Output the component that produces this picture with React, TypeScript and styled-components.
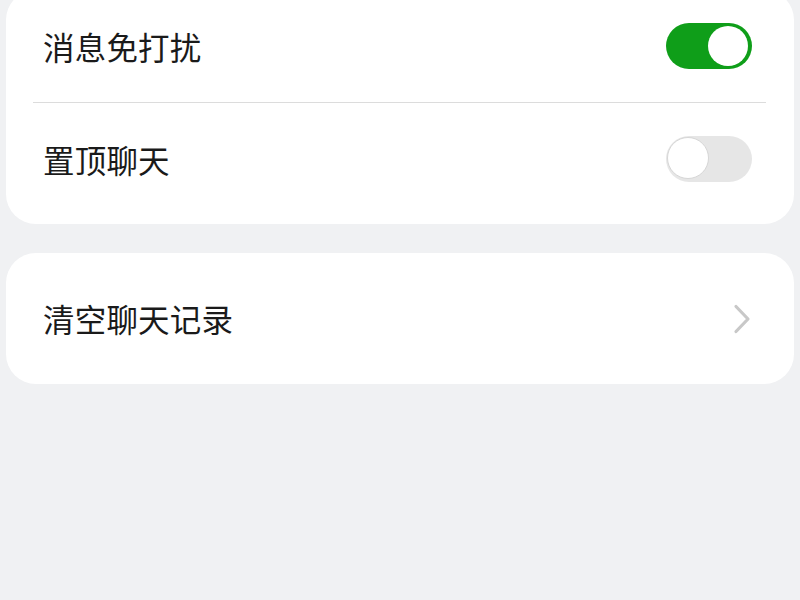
import React, { useState } from 'react';
import styled, { createGlobalStyle } from 'styled-components';

const GlobalStyle = createGlobalStyle`
  html, body {
    margin: 0;
    padding: 0;
    background: #f0f1f3;
  }
  body {
    font-family: "Noto Sans CJK SC", "Noto Sans", sans-serif;
    overflow: hidden;
  }
`;

const Page = styled.div`
  height: 600px;
  padding: 0 6px;
  display: flex;
  flex-direction: column;
  gap: 29px;
`;

const Card = styled.section<{ $offsetTop?: number }>`
  background: #ffffff;
  border-radius: 30px;
  margin-top: ${({ $offsetTop }) => ($offsetTop ? `${$offsetTop}px` : '0')};
  padding-bottom: ${({ $offsetTop }) => ($offsetTop ? '9px' : '0')};
`;

const Row = styled.div<{ $height: number }>`
  height: ${({ $height }) => $height}px;
  display: flex;
  align-items: center;
  justify-content: space-between;
  padding: 0 42px 0 37px;
`;

const Divider = styled.div`
  height: 1px;
  background: #dcdcdc;
  margin: 0 28px 0 27px;
`;

const Label = styled.span`
  font-size: 31.5px;
  color: #1a1a1a;
  letter-spacing: 0.2px;
  margin-top: -1px;
`;

const Track = styled.button<{ $on: boolean }>`
  position: relative;
  width: 86px;
  height: 46px;
  border: none;
  padding: 0;
  border-radius: 23px;
  background: ${({ $on }) => ($on ? '#0f9e19' : '#e6e6e6')};
  cursor: pointer;
`;

const Knob = styled.span<{ $on: boolean }>`
  position: absolute;
  top: ${({ $on }) => ($on ? '3px' : '1px')};
  left: ${({ $on }) => ($on ? '42px' : '1px')};
  width: ${({ $on }) => ($on ? '40px' : '42px')};
  height: ${({ $on }) => ($on ? '40px' : '42px')};
  box-sizing: border-box;
  border-radius: 50%;
  background: #ffffff;
  border: ${({ $on }) => ($on ? 'none' : '1.5px solid #d6d6d6')};
`;

const Chevron = styled.svg`
  width: 18px;
  height: 30px;
  margin-right: 1px;
`;

const Toggle: React.FC<{ on: boolean; onChange: () => void }> = ({ on, onChange }) => (
  <Track $on={on} onClick={onChange} aria-pressed={on}>
    <Knob $on={on} />
  </Track>
);

const App: React.FC = () => {
  const [mute, setMute] = useState(true);
  const [pinned, setPinned] = useState(false);

  return (
    <>
      <GlobalStyle />
      <Page>
        <Card $offsetTop={-10}>
          <Row $height={112}>
            <Label>消息免打扰</Label>
            <Toggle on={mute} onChange={() => setMute(!mute)} />
          </Row>
          <Divider />
          <Row $height={112}>
            <Label>置顶聊天</Label>
            <Toggle on={pinned} onChange={() => setPinned(!pinned)} />
          </Row>
        </Card>
        <Card>
          <Row $height={131}>
            <Label>清空聊天记录</Label>
            <Chevron viewBox="0 0 18 30" fill="none">
              <path d="M3 2.5 L15 15 L3 27.5" stroke="#c8c8c8" strokeWidth="3.2" strokeLinecap="round" strokeLinejoin="round" />
            </Chevron>
          </Row>
        </Card>
      </Page>
    </>
  );
};

export default App;
